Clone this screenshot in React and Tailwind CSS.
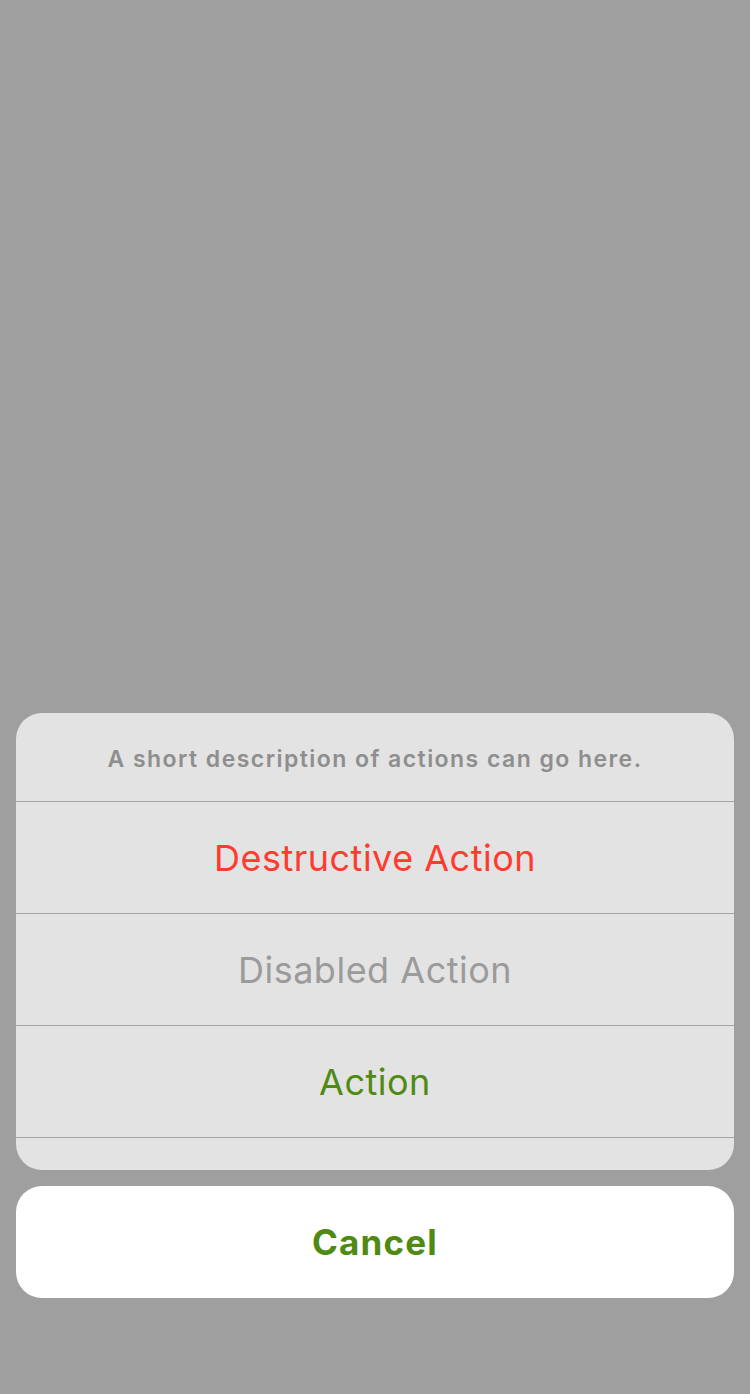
export default function App() {
  const font = { fontFamily: 'Inter, "Noto Sans", sans-serif' };
  return (
    <div className="w-[750px] h-[1394px] bg-[#9f9f9f] flex flex-col justify-end px-4 pb-[96px]" style={font}>
      <div className="bg-[#e3e3e3] rounded-[26px] overflow-hidden flex flex-col">
        <div className="h-[89px] flex items-center justify-center border-b border-[#a3a3a3] pt-[5px]">
          <span className="text-[23px] font-semibold text-[#8e8e8e] tracking-[1.45px]">A short description of actions can go here.</span>
        </div>
        <div className="h-[112px] flex items-center justify-center border-b border-[#a3a3a3]">
          <span className="text-[36px] text-[#ff3b30] tracking-[0.5px]">Destructive Action</span>
        </div>
        <div className="h-[112px] flex items-center justify-center border-b border-[#a3a3a3]">
          <span className="text-[36px] text-[#9b9b9b] tracking-[0.5px]">Disabled Action</span>
        </div>
        <div className="h-[112px] flex items-center justify-center border-b border-[#a3a3a3]">
          <span className="text-[36px] text-[#4f8a12] tracking-[0.5px]">Action</span>
        </div>
        <div className="h-[32px]" />
      </div>
      <div className="mt-4 h-[112px] bg-white rounded-[26px] flex items-center justify-center">
        <span className="text-[35px] font-bold text-[#4f8a12] tracking-[1.2px]">Cancel</span>
      </div>
    </div>
  );
}
